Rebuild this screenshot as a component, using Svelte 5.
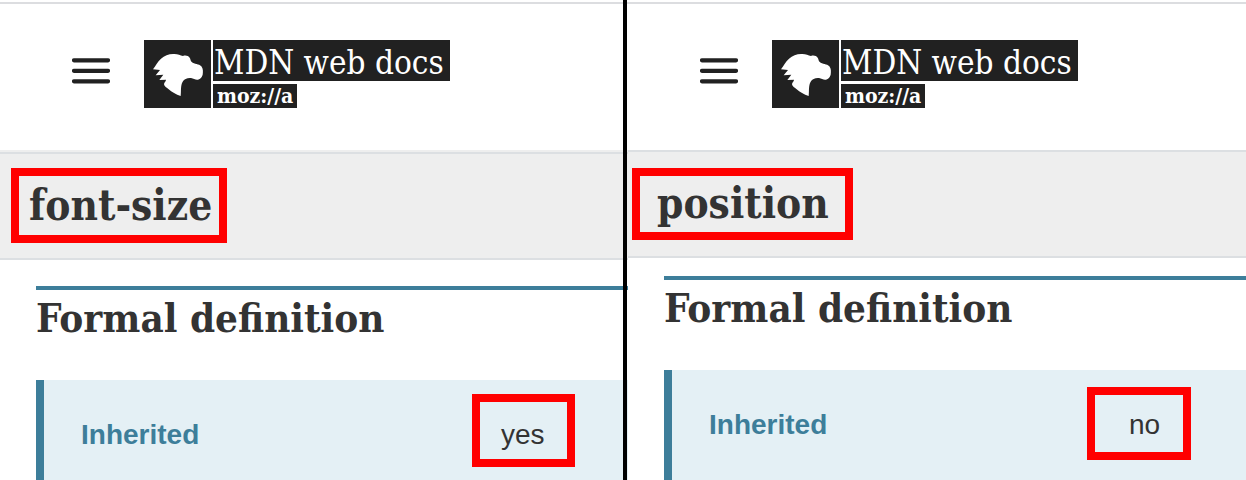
<script>
  const panes = [
    { id: 'left', property: 'font-size', inherited: 'yes' },
    { id: 'right', property: 'position', inherited: 'no' },
  ];
</script>

<main class="compare">
  {#each panes as pane (pane.id)}
    <section class="pane {pane.id}">
      <header class="top">
        <button class="menu" type="button" aria-label="Menu">
          <svg width="38" height="26" viewBox="0 0 38 26" aria-hidden="true">
            <path d="M2 2.3H36M2 12.8H36M2 23.3H36" stroke="#212121" stroke-width="4.2" stroke-linecap="round" />
          </svg>
        </button>
        <a class="logo" href="#home">
          <svg class="dino" width="67" height="68" viewBox="0 6 201 204" aria-hidden="true">
            <path
              fill="#fff"
              d="M27 94C35 84 40 71 51 62C62 52 76 47 91 48C102 49 109 52 117 54C124 51 133 53 137 59C140 63 139 68 143 72C151 79 165 77 172 85C178 92 177 102 176 110C174 118 169 123 162 125C155 127 149 121 141 120C130 119 121 123 116 131C109 143 112 158 110 174C96 170 83 162 74 154C68 149 61 146 60 139C60 133 66 130 66 125L46 126L58 110L35 112L48 96Z"
            />
          </svg>
          <span class="words">
            <span class="docs">MDN web docs</span>
            <span class="moz">moz://a</span>
          </span>
        </a>
      </header>

      <div class="title">
        <h1>{pane.property}</h1>
        <span class="mark name-mark"></span>
      </div>

      <div class="content">
        <h2>Formal definition</h2>
        <div class="info">
          <table>
            <tbody>
              <tr>
                <th scope="row">Inherited</th>
                <td>{pane.inherited}</td>
              </tr>
            </tbody>
          </table>
          <span class="mark value-mark"></span>
        </div>
      </div>
    </section>
  {/each}
</main>

<style>
  :global(body) {
    margin: 0;
    background: #fff;
  }

  .compare {
    display: grid;
    grid-template-columns: 628fr 618fr;
    min-height: 100vh;
    color: #333;
    font-family: 'Liberation Sans', Arial, sans-serif;
  }

  .pane {
    position: relative;
    display: flex;
    flex-direction: column;
    min-width: 0;
    padding-top: 2px;
  }

  .left::after {
    content: '';
    position: absolute;
    top: 0;
    bottom: 0;
    right: 1px;
    width: 4px;
    background: #000;
  }

  .top {
    display: flex;
    align-items: flex-start;
    gap: 34px;
    box-sizing: border-box;
    height: 148px;
    padding: 36px 0 0 72px;
    border-top: 2px solid #dcdde0;
  }

  .left .top {
    height: 150px;
    border-bottom: 2px solid #eee;
  }

  .menu {
    margin: 18px 0 0;
    padding: 0;
    border: 0;
    background: none;
    line-height: 0;
  }

  .logo {
    display: flex;
    gap: 2px;
    color: #fff;
    font-family: 'DejaVu Serif Condensed', 'DejaVu Serif', serif;
    text-decoration: none;
    white-space: nowrap;
  }

  .dino {
    background: #212121;
  }

  .words {
    display: flex;
    flex-direction: column;
    align-items: flex-start;
    gap: 3px;
  }

  .docs,
  .moz {
    box-sizing: border-box;
    background: #212121;
  }

  .docs {
    min-width: 237px;
    padding: 4px 1px 0;
    font-size: 33px;
    line-height: 37px;
  }

  .moz {
    min-width: 84px;
    padding: 0 4px;
    font-size: 21px;
    font-weight: 700;
    line-height: 24px;
  }

  .title {
    position: relative;
    box-sizing: border-box;
    height: 108px;
    padding: 24px 29px 0;
    border: solid #dcdfe2;
    border-width: 2px 0;
    background: #eee;
  }

  h1,
  h2 {
    margin: 0;
    font-family: 'DejaVu Serif Condensed', 'DejaVu Serif', serif;
    font-weight: 700;
    line-height: 56px;
    white-space: nowrap;
  }

  h1 {
    font-size: 42px;
  }

  h2 {
    border-top: 4px solid #3d7e9a;
    font-size: 40px;
  }

  .content {
    display: flex;
    flex: 1;
    flex-direction: column;
    gap: 34px;
    padding: 18px 0 0 36px;
  }

  .left .content {
    padding-top: 26px;
  }

  .info {
    position: relative;
    flex: 1;
    border-left: 8px solid #3d7e9a;
    background: #e4f0f5;
  }

  table {
    width: 100%;
    border-collapse: collapse;
    font-size: 28px;
    line-height: 34px;
    text-align: left;
  }

  th,
  td {
    padding: 38px 0 0;
  }

  th {
    width: 420px;
    padding-left: 37px;
    color: #3d7e9a;
  }

  .mark {
    position: absolute;
    box-sizing: border-box;
    border: 8px solid #f00;
  }

  .name-mark {
    top: 16px;
    left: 4px;
    width: 221px;
    height: 72px;
  }

  .left .name-mark {
    top: 14px;
    left: 11px;
    width: 216px;
    height: 75px;
  }

  .value-mark {
    top: 17px;
    left: 415px;
    width: 104px;
    height: 73px;
  }

  .left .value-mark {
    top: 14px;
    left: 428px;
    width: 103px;
  }
</style>
